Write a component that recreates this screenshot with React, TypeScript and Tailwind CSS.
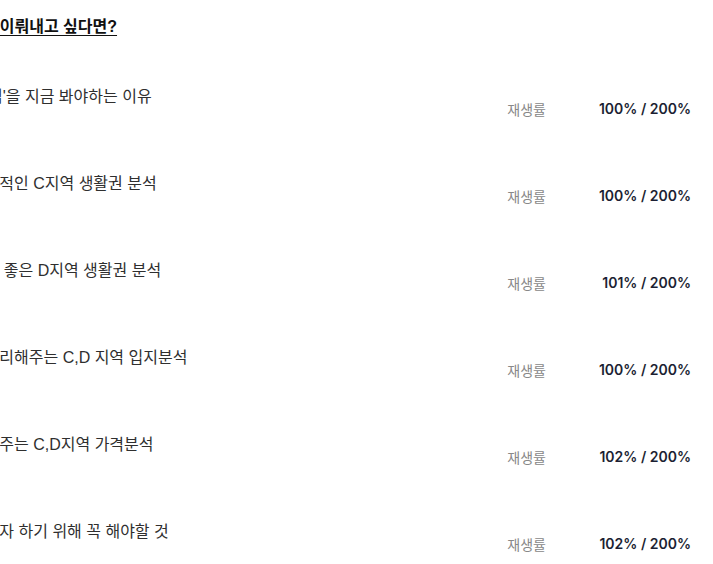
import React from 'react';

interface Lesson {
  title: string;
  progress: number;
  total: number;
}

const lessons: Lesson[] = [
  { title: "왜 'W지역'을 지금 봐야하는 이유", progress: 100, total: 200 },
  { title: '가장 대표적인 C지역 생활권 분석', progress: 100, total: 200 },
  { title: '입지가 더 좋은 D지역 생활권 분석', progress: 101, total: 200 },
  { title: '한번에 정리해주는 C,D 지역 입지분석', progress: 100, total: 200 },
  { title: '잘 비교해주는 C,D지역 가격분석', progress: 102, total: 200 },
  { title: '안전한 투자 하기 위해 꼭 해야할 것', progress: 102, total: 200 },
];

const App = () => {
  return (
    <div className="w-[713px] h-[564px] overflow-hidden bg-white">
      <div className="-ml-[64px] pt-[16px] pr-[22px] font-['Liberation_Sans','Noto_Sans_CJK_KR',sans-serif]">
        {/* Section heading */}
        <h2 className="-ml-[4px] text-[16px] leading-[22px] font-bold text-[#111] underline underline-offset-[3px] whitespace-nowrap">
          목표를 꼭 이뤄내고 싶다면?
        </h2>

        {/* Lesson list */}
        <ul className="mt-[48px]">
          {lessons.map((lesson, i) => (
            <li key={i} className="flex justify-between items-start h-[87px]">
              <span className="text-[16px] leading-[22px] text-[#2f2f2f] whitespace-nowrap">
                {lesson.title}
              </span>
              <div className="flex items-center mt-[12px] leading-[22px]">
                <span className="text-[14px] text-[#888] font-['Noto_Sans_CJK_KR',sans-serif]">
                  재생률
                </span>
                <span className="w-[145px] text-right text-[14px] font-semibold text-[#1c1f33] font-['Inter','Noto_Sans_CJK_KR',sans-serif]">
                  {lesson.progress}% / {lesson.total}%
                </span>
              </div>
            </li>
          ))}
        </ul>
      </div>
    </div>
  );
};

export default App;
